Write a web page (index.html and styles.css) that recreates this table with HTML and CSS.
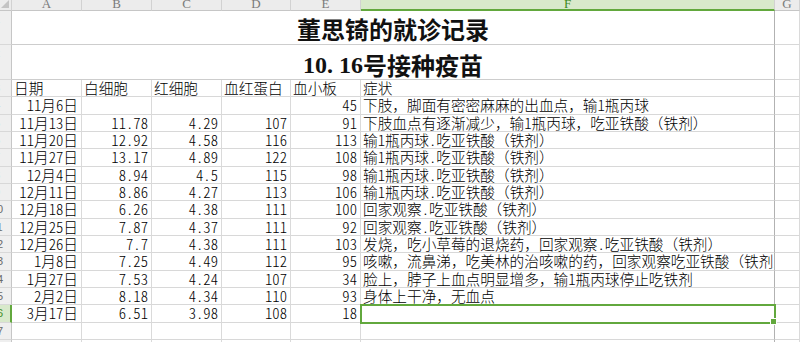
FILE: index.html
```html
<!DOCTYPE html>
<html lang="zh-CN">
<head>
<meta charset="utf-8">
<title>董思锜的就诊记录</title>
<link rel="stylesheet" href="styles.css">
</head>
<body>
<div class="sheet">
  <div class="ch corner"><svg class="tri" width="8" height="8" viewBox="0 0 8 8"><path d="M8 0 L8 8 L0 8 Z" fill="#c4c4c4"/></svg></div>
  <div class="ch"><span>A</span></div>
  <div class="ch"><span>B</span></div>
  <div class="ch"><span>C</span></div>
  <div class="ch"><span>D</span></div>
  <div class="ch"><span>E</span></div>
  <div class="ch ch-sel"><span>F</span></div>
  <div class="ch"><span>G</span></div>

  <div class="rh"><span>1</span></div>
  <div class="cell title t1">董思锜的就诊记录</div>
  <div class="cell g"></div>

  <div class="rh"><span>2</span></div>
  <div class="cell title t2"><span class="lat">10.</span><span class="lat">16</span>号接种疫苗</div>
  <div class="cell g"></div>

  <div class="rh"><span>3</span></div>
  <div class="cell">日期</div><div class="cell">白细胞</div><div class="cell">红细胞</div><div class="cell">血红蛋白</div><div class="cell">血小板</div><div class="cell txt">症状</div><div class="cell g"></div>

  <div class="rh"><span>4</span></div>
  <div class="cell num">11月6日</div><div class="cell num"></div><div class="cell num"></div><div class="cell num"></div><div class="cell num">45</div><div class="cell txt">下肢，脚面有密密麻麻的出血点，输<span class="h">1</span>瓶丙球</div><div class="cell g"></div>

  <div class="rh"><span>5</span></div>
  <div class="cell num">11月13日</div><div class="cell num">11.78</div><div class="cell num">4.29</div><div class="cell num">107</div><div class="cell num">91</div><div class="cell txt">下肢血点有逐渐减少，输<span class="h">1</span>瓶丙球，吃亚铁酸（铁剂）</div><div class="cell g"></div>

  <div class="rh"><span>6</span></div>
  <div class="cell num">11月20日</div><div class="cell num">12.92</div><div class="cell num">4.58</div><div class="cell num">116</div><div class="cell num">113</div><div class="cell txt">输<span class="h">1</span>瓶丙球<span class="h">.</span>吃亚铁酸（铁剂）</div><div class="cell g"></div>

  <div class="rh"><span>7</span></div>
  <div class="cell num">11月27日</div><div class="cell num">13.17</div><div class="cell num">4.89</div><div class="cell num">122</div><div class="cell num">108</div><div class="cell txt">输<span class="h">1</span>瓶丙球<span class="h">.</span>吃亚铁酸（铁剂）</div><div class="cell g"></div>

  <div class="rh"><span>8</span></div>
  <div class="cell num">12月4日</div><div class="cell num">8.94</div><div class="cell num">4.5</div><div class="cell num">115</div><div class="cell num">98</div><div class="cell txt">输<span class="h">1</span>瓶丙球<span class="h">.</span>吃亚铁酸（铁剂）</div><div class="cell g"></div>

  <div class="rh"><span>9</span></div>
  <div class="cell num">12月11日</div><div class="cell num">8.86</div><div class="cell num">4.27</div><div class="cell num">113</div><div class="cell num">106</div><div class="cell txt">输<span class="h">1</span>瓶丙球<span class="h">.</span>吃亚铁酸（铁剂）</div><div class="cell g"></div>

  <div class="rh"><span>10</span></div>
  <div class="cell num">12月18日</div><div class="cell num">6.26</div><div class="cell num">4.38</div><div class="cell num">111</div><div class="cell num">100</div><div class="cell txt">回家观察<span class="h">.</span>吃亚铁酸（铁剂）</div><div class="cell g"></div>

  <div class="rh"><span>11</span></div>
  <div class="cell num">12月25日</div><div class="cell num">7.87</div><div class="cell num">4.37</div><div class="cell num">111</div><div class="cell num">92</div><div class="cell txt">回家观察<span class="h">.</span>吃亚铁酸（铁剂）</div><div class="cell g"></div>

  <div class="rh"><span>12</span></div>
  <div class="cell num">12月26日</div><div class="cell num">7.7</div><div class="cell num">4.38</div><div class="cell num">111</div><div class="cell num">103</div><div class="cell txt">发烧，吃小草莓的退烧药，回家观察<span class="h">.</span>吃亚铁酸（铁剂）</div><div class="cell g"></div>

  <div class="rh"><span>13</span></div>
  <div class="cell num">1月8日</div><div class="cell num">7.25</div><div class="cell num">4.49</div><div class="cell num">112</div><div class="cell num">95</div><div class="cell txt">咳嗽，流鼻涕，吃美林的治咳嗽的药，回家观察吃亚铁酸（铁剂）</div><div class="cell g"></div>

  <div class="rh"><span>14</span></div>
  <div class="cell num">1月27日</div><div class="cell num">7.53</div><div class="cell num">4.24</div><div class="cell num">107</div><div class="cell num">34</div><div class="cell txt">脸上，脖子上血点明显增多，输<span class="h">1</span>瓶丙球停止吃铁剂</div><div class="cell g"></div>

  <div class="rh"><span>15</span></div>
  <div class="cell num">2月2日</div><div class="cell num">8.18</div><div class="cell num">4.34</div><div class="cell num">110</div><div class="cell num">93</div><div class="cell txt">身体上干净，无血点</div><div class="cell g"></div>

  <div class="rh rh-sel"><span>16</span></div>
  <div class="cell num">3月17日</div><div class="cell num">6.51</div><div class="cell num">3.98</div><div class="cell num">108</div><div class="cell num">18</div><div class="cell txt selected"></div><div class="cell g"></div>

  <div class="rh"><span>17</span></div>
  <div class="cell"></div><div class="cell"></div><div class="cell"></div><div class="cell"></div><div class="cell"></div><div class="cell txt"></div><div class="cell g"></div>

  <div class="rh"><span>18</span></div>
  <div class="cell"></div><div class="cell"></div><div class="cell"></div><div class="cell"></div><div class="cell"></div><div class="cell txt"></div><div class="cell g"></div>
</div>
</body>
</html>
```

FILE: styles.css
```css
* {
  box-sizing: border-box;
  margin: 0;
  padding: 0;
}

html,
body {
  width: 800px;
  height: 342px;
  overflow: hidden;
  background: #ffffff;
}

body {
  font-family: "Noto Sans CJK SC", sans-serif;
  color: #111111;
}

.sheet {
  display: grid;
  grid-template-columns: 12px 70px 70px 70px 69px 70px 414px 25px;
  grid-template-rows: 11px 34px 35px repeat(15, 17.33px);
}

/* column headers */
.ch {
  background: #ececec;
  border-right: 1px solid #d2d2d2;
  border-bottom: 1px solid #c6c6c6;
  overflow: hidden;
  text-align: center;
  font-family: "Liberation Serif", serif;
  font-size: 13px;
  line-height: 11px;
  color: #7a7a7a;
}

.ch span {
  display: block;
  margin-top: -2px;
}

.corner {
  display: flex;
  justify-content: flex-end;
  align-items: flex-end;
  padding: 0 2px 2px 0;
}

.tri {
  display: block;
}

.ch-sel {
  background: #d8e9cb;
  border-bottom: 2px solid #62a83d;
  color: #3e8a20;
}

/* row headers */
.rh {
  background: #efefef;
  border-right: 1px solid #c6c6c6;
  border-bottom: 1px solid #d8d8d8;
  overflow: hidden;
  font-family: "Liberation Sans", sans-serif;
  font-size: 11px;
  line-height: 16px;
  color: #6a6a6a;
}

.rh span {
  display: block;
  width: 30px;
  margin-left: -18px;
  text-align: center;
}

.rh-sel {
  background: #d8e9cb;
  border-right: 2px solid #62a83d;
  color: #3e8a20;
}

/* cells */
.cell {
  border-right: 1px solid #dadada;
  border-bottom: 1px solid #d8d8d8;
  font-size: 14.67px;
  font-weight: 300;
  line-height: 16px;
  white-space: nowrap;
  overflow: hidden;
  padding: 0 2px;
  color: #000000;
}

.num {
  text-align: right;
  padding-right: 3px;
  font-feature-settings: "hwid" 1;
}

.h {
  font-feature-settings: "hwid" 1;
}

.txt {
  border-right-color: #b2b2b2;
}

.g {
  border-right-color: #dadada;
}

.title {
  grid-column: 2 / 8;
  display: flex;
  justify-content: center;
  align-items: center;
  font-size: 24px;
  font-weight: 700;
  line-height: 28px;
  border-right-color: #b2b2b2;
  border-bottom-color: #cdcdcd;
  color: #111111;
}

.t1 {
  padding-top: 3px;
}

.t2 {
  padding-top: 6px;
}

.lat {
  font-family: "Liberation Serif", serif;
}

.lat:first-child {
  margin-right: 6px;
}

.selected {
  position: relative;
  overflow: visible;
  outline: 2px solid #62a83d;
  outline-offset: -1px;
}

.selected::after {
  content: "";
  position: absolute;
  right: -3px;
  bottom: -3px;
  width: 5px;
  height: 5px;
  background: #62a83d;
  border: 1px solid #ffffff;
}
```
